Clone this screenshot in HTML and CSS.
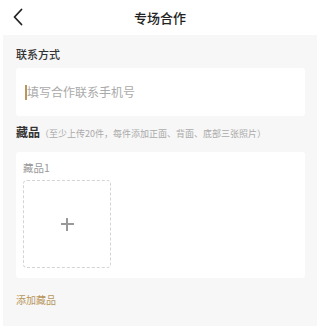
FILE: index.html
```html
<!DOCTYPE html>
<html lang="zh">
<head>
<meta charset="utf-8">
<link rel="stylesheet" href="styles.css">
</head>
<body>
<header class="nav">
  <svg class="back" width="12" height="18" viewBox="0 0 12 18"><polyline points="9.5,1.5 2.5,9 9.5,16.5" fill="none" stroke="#222" stroke-width="1.8" stroke-linecap="round" stroke-linejoin="round"/></svg>
  <h1 class="title">专场合作</h1>
</header>
<main class="panel">
  <div class="label">联系方式</div>
  <div class="input">
    <span class="caret"></span><span class="placeholder">填写合作联系手机号</span>
  </div>
  <div class="section-label"><span class="strong">藏品</span><span class="hint">（至少上传20件，每件添加正面、背面、底部三张照片）</span></div>
  <div class="card">
    <div class="item-name">藏品1</div>
    <div class="upload"><span class="plus"></span></div>
  </div>
  <div class="add">添加藏品</div>
</main>
</body>
</html>
```
FILE: styles.css
```css
* { box-sizing: border-box; margin: 0; padding: 0; }
html, body { background: #fff; }
body {
  width: 320px;
  height: 329px;
  font-family: "Noto Sans CJK SC", "Noto Sans", sans-serif;
  color: #222;
  overflow: hidden;
}
.nav {
  height: 35px;
  display: flex;
  align-items: center;
  justify-content: center;
  position: relative;
}
.back {
  position: absolute;
  left: 12px;
  top: 8px;
}
.title {
  font-size: 13px;
  font-weight: 500;
  color: #222;
  line-height: 18px;
}
.panel {
  margin: 0 3px;
  height: 291px;
  background: #f7f7f7;
  padding: 9px 12px 16px 13px;
  display: flex;
  flex-direction: column;
}
.label {
  font-size: 11px;
  font-weight: 500;
  line-height: 20px;
  color: #333;
  margin-bottom: 4px;
}
.input {
  height: 50px;
  background: #fff;
  border-radius: 3px;
  display: flex;
  align-items: center;
  padding-left: 9px;
}
.caret {
  width: 2px;
  height: 15px;
  background: #b8965c;
}
.placeholder {
  font-size: 12px;
  color: #aaa;
  line-height: 18px;
}
.section-label {
  margin-top: 6px;
  line-height: 20px;
  display: flex;
  align-items: baseline;
}
.strong {
  font-size: 12px;
  font-weight: 700;
  color: #333;
}
.hint {
  font-size: 9px;
  color: #aaa;
}
.card {
  margin-top: 8px;
  background: #fff;
  border-radius: 3px;
  height: 126px;
  padding: 6px 7px 10px;
}
.item-name {
  font-size: 10.5px;
  color: #999;
  line-height: 20px;
  margin-bottom: 2px;
}
.upload {
  width: 88px;
  height: 88px;
  border: 1px dashed #d4d4d4;
  border-radius: 4px;
  display: flex;
  align-items: center;
  justify-content: center;
}
.plus {
  width: 13px;
  height: 13px;
  background:
    linear-gradient(#999, #999) center / 13px 2px no-repeat,
    linear-gradient(#999, #999) center / 2px 13px no-repeat;
}
.add {
  margin-top: 12px;
  font-size: 10px;
  line-height: 20px;
  color: #b8965c;
}
```
